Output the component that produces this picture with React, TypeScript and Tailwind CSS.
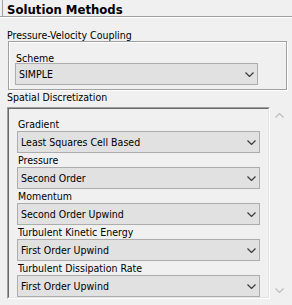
import { FC } from "react";

const Chevron: FC<{ up?: boolean, className?: string }> = ({ up, className }) => (
    <svg width="9" height="5" viewBox="0 0 9 5" className={className}>
        <path d={up ? "M0.5 4.5 L4.5 0.5 L8.5 4.5" : "M0.5 0.5 L4.5 4.5 L8.5 0.5"} fill="none" stroke="currentColor" strokeWidth="1.2" />
    </svg>
);

const Select: FC<{ value: string }> = ({ value }) => (
    <div className="flex h-[22px] w-[243px] items-center justify-between border border-[#adadad] bg-[#e1e1e1] pl-[3px] pr-[3px]">
        <span className="leading-[14px]">{value}</span>
        <Chevron className="text-[#3c3c3c]" />
    </div>
);

const spatial = [
    ['Gradient', 'Least Squares Cell Based'],
    ['Pressure', 'Second Order'],
    ['Momentum', 'Second Order Upwind'],
    ['Turbulent Kinetic Energy', 'First Order Upwind'],
    ['Turbulent Dissipation Rate', 'First Order Upwind'],
];

const App: FC = () => {
    return (
        <div className="h-[305px] w-[292px] overflow-hidden bg-[#f0f0f0] text-[10.5px] text-black font-['DejaVu_Sans_Condensed','DejaVu_Sans',sans-serif] [font-stretch:condensed]">
            {/* header */}
            <div className="ml-[2px] h-[16px] border-l border-[#a0a0a0] pl-[4px] text-[13px] font-bold leading-[19px]">
                Solution Methods
            </div>
            <div className="h-px bg-[#a0a0a0]" />
            <div className="h-px bg-white" />

            <div className="mt-[10px] h-[13px] pl-[7px] leading-[14px]">Pressure-Velocity Coupling</div>
            <div className="ml-[8px] h-[49px] w-[279px] border border-[#a0a0a0] pl-[6px] pt-[9px] shadow-[inset_1px_1px_0_#fff,1px_1px_0_#fff]">
                <div className="h-[12px] pl-px leading-[14px]">Scheme</div>
                <Select value="SIMPLE" />
            </div>

            <div className="h-[17px] pl-[7px] leading-[14px]">Spatial Discretization</div>
            <div className="ml-[7px] flex h-[192px]">
                <div className="w-[263px] border border-t-[#a0a0a0] border-l-[#a0a0a0] border-b-white border-r-white">
                    <div className="h-full overflow-hidden border border-t-[#696969] border-l-[#696969] border-b-[#e3e3e3] border-r-[#e3e3e3] px-[8px] pt-[8px]">
                        {spatial.map(([label, value]) => (
                            <div key={label}>
                                <div className="h-[14px] pl-px leading-[14px]">{label}</div>
                                <Select value={value} />
                            </div>
                        ))}
                    </div>
                </div>
                <div className="ml-px flex w-[17px] flex-col justify-between text-[#bdbdbd]">
                    <div className="flex h-[17px] items-center justify-center"><Chevron up /></div>
                    <div className="flex h-[17px] items-center justify-center"><Chevron /></div>
                </div>
            </div>
        </div>
    );
};

export default App;
